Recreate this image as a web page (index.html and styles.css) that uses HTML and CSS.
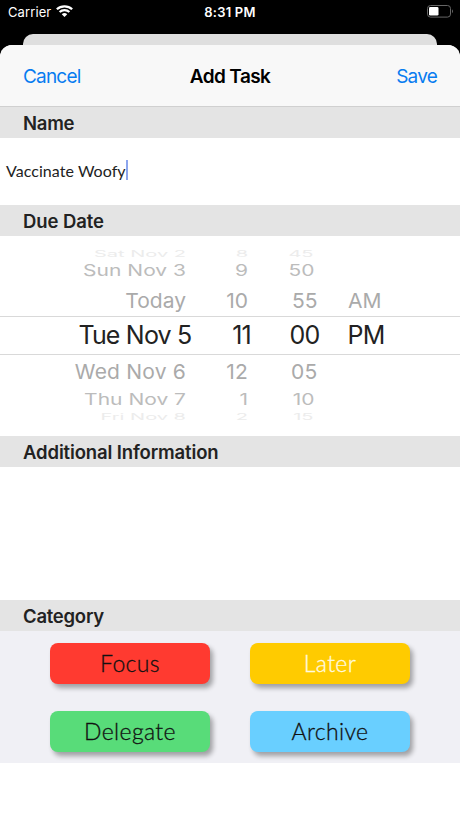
FILE: index.html
```html
<!DOCTYPE html>
<html lang="en">
<head>
<meta charset="utf-8">
<title>Add Task</title>
<link rel="stylesheet" href="styles.css">
</head>
<body>
<header class="status">
  <div class="carrier"><span>Carrier</span>
    <svg width="17" height="12" viewBox="0 0 16 12" preserveAspectRatio="none" fill="none" stroke="#fff" stroke-width="2.1"><path d="M.8 4.3a10.3 10.3 0 0 1 14.4 0M3.4 7a6.6 6.6 0 0 1 9.2 0"/><path d="M8 12 5.4 9.3a3.8 3.8 0 0 1 5.2 0z" fill="#fff" stroke="none"/></svg>
  </div>
  <div class="clock">8:31 PM</div>
  <svg class="battery" width="27" height="13" viewBox="0 0 27 13"><rect x=".5" y=".5" width="23" height="11.6" rx="3" fill="none" stroke="#666"/><rect x="2" y="2.1" width="9.5" height="8.4" rx="1.3" fill="#fff"/><path d="M25 4.2q2 2 0 4z" fill="#666"/></svg>
</header>
<div class="backcard"></div>
<main class="sheet">
  <nav class="nav"><a class="cancel">Cancel</a><h1>Add Task</h1><a class="save">Save</a></nav>
  <h2>Name</h2>
  <div class="name-field"><span class="value">Vaccinate Woofy</span><i class="caret"></i></div>
  <h2 class="due">Due Date</h2>
  <div class="picker">
    <div class="row far top"><span>Sat Nov 2</span><span>8</span><span>45</span><span></span></div>
    <div class="row mid"><span>Sun Nov 3</span><span>9</span><span>50</span><span></span></div>
    <div class="row near"><span class="today">Today</span><span>10</span><span>55</span><span>AM</span></div>
    <div class="row current"><span>Tue Nov 5</span><span>11</span><span>00</span><span>PM</span></div>
    <div class="row near lower"><span>Wed Nov 6</span><span>12</span><span>05</span><span></span></div>
    <div class="row mid lower"><span>Thu Nov 7</span><span>1</span><span>10</span><span></span></div>
    <div class="row far bottom"><span>Fri Nov 8</span><span>2</span><span>15</span><span></span></div>
  </div>
  <h2 class="info">Additional Information</h2>
  <div class="notes"></div>
  <h2>Category</h2>
  <div class="categories">
    <button class="focus">Focus</button>
    <button class="later">Later</button>
    <button class="delegate">Delegate</button>
    <button class="archive">Archive</button>
  </div>
</main>
</body>
</html>
```
FILE: styles.css
```css
* { box-sizing: border-box; }
body { margin: 0; width: 460px; height: 818px; background: #000; overflow: hidden; font-family: Inter, "Liberation Sans", sans-serif; color: #222; display: flex; flex-direction: column; }
.status { height: 34px; flex: none; color: #fff; display: grid; grid-template-columns: 1fr 1fr 1fr; padding: 0 6px 0 8px; line-height: 24px; font-size: 13px; }
.carrier { display: flex; gap: 5px; letter-spacing: .1px; }
.carrier svg { margin-top: 5px; }
.clock { text-align: center; font-weight: 600; letter-spacing: .2px; text-indent: -2px; }
.battery { justify-self: end; margin-top: 5px; }
.backcard { height: 11px; flex: none; margin: 0 23px; background: #dfdfdf; border-radius: 10px 10px 0 0; }
.sheet { flex: 1; background: #fff; border-radius: 12px 12px 0 0; overflow: hidden; }
.nav { height: 62px; display: grid; grid-template-columns: 1fr 1fr 1fr; align-items: center; padding: 1px 23px 0; background: #f8f8f8; border-bottom: 1px solid #d0d0d0; font-size: 19px; letter-spacing: -.8px; color: #087cf0; }
.nav h1 { margin: 0; color: #000; font-size: 19px; font-weight: 600; text-align: center; letter-spacing: -.6px; }
.save { text-align: right; }
h2 { margin: 0; height: 31px; padding-left: 23px; background: #e4e4e4; font-size: 18.5px; font-weight: 600; line-height: 32px; letter-spacing: -.25px; }
h2.due { letter-spacing: -.1px; }
h2.info { letter-spacing: -.13px; }
.name-field { height: 67px; padding: 0 0 3px 6px; display: flex; align-items: center; font-family: Lato, sans-serif; font-size: 16px; letter-spacing: .05px; }
.caret { width: 2px; height: 20px; background: #8ca5ed; }
.picker { height: 200px; padding-top: 14px; }
.row { display: grid; grid-template-columns: 186px 62px 69.5px 1fr; height: 31px; align-content: center; text-align: right; font-size: 21px; line-height: 31px; color: #aaa; white-space: nowrap; }
.row.near { transform: scaleY(.97); }
.row span:last-child { text-align: left; padding-left: 30.5px; }
.row.lower { position: relative; top: 1px; }
.row.near.lower { letter-spacing: .2px; }
.row.mid { height: 27px; margin: -1px 0 1px; color: #bcbcbc; }
.row.mid span { transform: scaleY(.74); }
.row.mid span:nth-child(3) { padding-right: 3px; }
.row.far { height: 8px; line-height: 8px; color: #ececec; font-size: 20px; }
.row.far span { transform: scaleY(.45); }
.row.far span:nth-child(3) { padding-right: 4px; }
.row.current { height: 39px; font-size: 25px; line-height: 39px; color: #222; border: solid #d9d9d9; border-width: 1px 0; grid-template-columns: 191.5px 59.5px 68.5px 1fr; letter-spacing: -.8px; }
.row.current span:last-child { padding-left: 28px; }
.notes { height: 133px; }
.categories { height: 132px; background: #f0f0f5; padding: 12px 50px; display: grid; grid-template-columns: 160px 160px; grid-auto-rows: 40.5px; gap: 27.5px 40px; }
button { border: 0; padding: 0 0 1px; border-radius: 8px; font: 300 23px Lato, sans-serif; letter-spacing: .35px; color: #111; -webkit-text-stroke: .3px currentColor; box-shadow: 3px 4px 5px #0005; }
.focus { background: #ff3a30; }
.later { background: #ffcb00; color: #fffbe0; }
.delegate { background: #58dc79; }
.archive { background: #69cfff; }
```
